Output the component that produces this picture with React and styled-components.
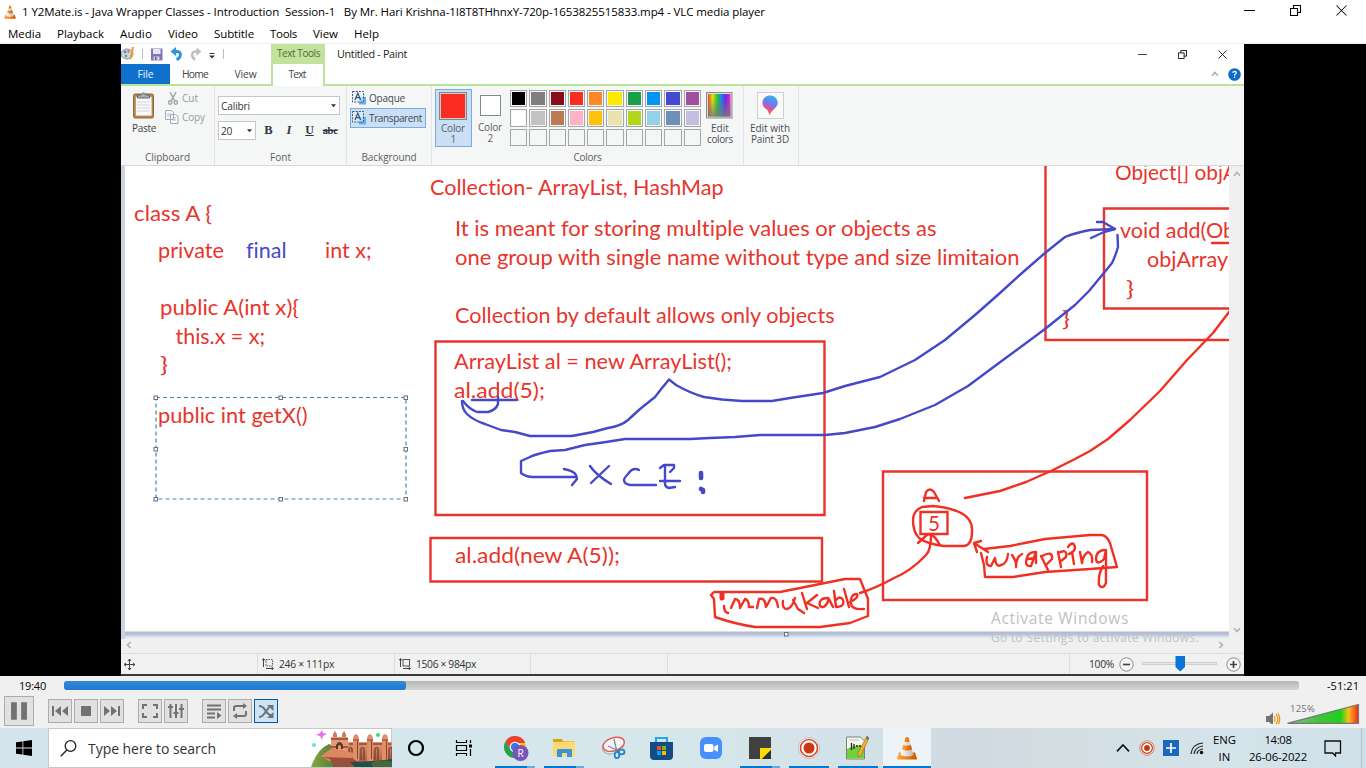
import React, { useLayoutEffect, useRef, useState } from "react";
import styled, { createGlobalStyle } from "styled-components";

const Global = createGlobalStyle`
  * { box-sizing: border-box; }
  html, body { margin: 0; padding: 0; overflow: hidden; }
  body { font-family: "Open Sans", "Noto Sans", sans-serif; font-size: 11.5px; color: #000; }
  svg { display: block; flex: none; }
`;

const RED = "#e8352b";
const BLUE = "#4549c8";

/* Text set to a known advance width by letter spacing */
const Run = styled.span`
  display: inline-block;
  flex: none;
  white-space: pre;
  width: ${(p) => p.$w}px;
  font-size: ${(p) => p.$size || 11.5}px;
  line-height: ${(p) => p.$lh || 14}px;
  color: ${(p) => p.$color || "inherit"};
`;

function Label({ w, size, lh, color, children }) {
  const ref = useRef(null);
  const [gap, setGap] = useState(0);
  useLayoutEffect(() => {
    const range = document.createRange();
    range.selectNodeContents(ref.current);
    const natural = range.getBoundingClientRect().width;
    setGap((w - natural) / children.length);
  }, [w, children]);
  return (
    <Run ref={ref} $w={w} $size={size} $lh={lh} $color={color} style={{ letterSpacing: gap }}>
      {children}
    </Run>
  );
}

const Screen = styled.div`
  width: 1366px;
  height: 768px;
  display: flex;
  flex-direction: column;
  background: #fff;
  overflow: hidden;
`;
const TitleBar = styled.header`
  height: 24px;
  display: flex;
  align-items: center;
  padding-left: 3px;
  gap: 5px;
`;
const WindowButtons = styled.div`
  margin-left: auto;
  display: flex;
  align-items: center;
  gap: ${(p) => p.$gap}px;
  padding-right: ${(p) => p.$pad}px;
  height: 20px;
`;
const MainButtons = styled(WindowButtons)`
  padding-bottom: 3px;
`;
const MenuBar = styled.nav`
  height: 20px;
  display: flex;
  align-items: center;
  gap: 16px;
  padding-left: 8px;
  border-bottom: 1px solid #eee;
`;
const Video = styled.main`
  height: 632px;
  display: flex;
  justify-content: flex-start;
  padding-left: 121px;
  background: #000;
`;
const Paint = styled.section`
  width: 1123px;
  height: 632px;
  display: flex;
  flex-direction: column;
  background: #fff;
  color: #333;
  border-bottom: 2px solid #3a3a3c;
`;
const PaintTitle = styled.div`
  height: 20px;
  display: flex;
  align-items: center;
`;
const QuickAccess = styled.div`
  width: 150px;
  height: 20px;
`;
const ToolsTag = styled.div`
  width: 54px;
  height: 20px;
  padding: 1px 0 0 6px;
  margin-right: 12px;
  background: #c1e39c;
`;
const TabRow = styled.div`
  height: 22px;
  display: flex;
  align-items: stretch;
  border-bottom: 2px solid #bce39a;
`;
const Tab = styled.div`
  width: ${(p) => p.$w}px;
  height: ${(p) => (p.$active ? 22 : 20)}px;
  display: flex;
  justify-content: center;
  align-items: center;
  background: ${(p) => (p.$file ? "#1071cd" : "#fff")};
  color: ${(p) => (p.$file ? "#e6f2ff" : "#444")};
  ${(p) => p.$active && "border: 2px solid #bce39a; border-width: 0 2px; padding: 0 2px 2px 0;"}
`;
const TabTools = styled.div`
  margin-left: auto;
  padding: 0 3px 0 0;
  display: flex;
  align-items: center;
  gap: 9px;
`;
const Ribbon = styled.div`
  height: 80px;
  display: flex;
  background: #f5f6f6;
  border-bottom: 1px solid #d8d9da;
`;
const Group = styled.div`
  width: ${(p) => p.$w}px;
  height: 79px;
  display: flex;
  flex-direction: column;
  align-items: center;
  border-right: 1px solid #e2e3e4;
  color: #5f6063;
`;
const GroupBody = styled.div`
  align-self: stretch;
  height: 64px;
  display: flex;
  padding: ${(p) => p.$pad || "0"};
  gap: ${(p) => p.$gap || 0}px;
`;
const Column = styled.div`
  display: flex;
  flex-direction: column;
  align-items: ${(p) => p.$align || "flex-start"};
  gap: ${(p) => p.$gap || 0}px;
`;
const Line = styled.div`
  display: flex;
  align-items: center;
  gap: ${(p) => p.$gap || 0}px;
  padding-left: ${(p) => p.$indent || 0}px;
`;
const Combo = styled.div`
  width: ${(p) => p.$w}px;
  height: 19px;
  display: flex;
  align-items: center;
  justify-content: space-between;
  padding: 0 3px 0 2px;
  background: #fff;
  border: 1px solid #c1c6cf;
  color: #333;
`;
const Formats = styled.div`
  display: flex;
  align-items: center;
  padding-left: 2px;
`;
const Format = styled.span`
  width: 20.6px;
  text-align: center;
  font: bold 12px "Liberation Serif", serif;
  font-size: ${(p) => p.$size || 12}px;
  font-style: ${(p) => (p.$italic ? "italic" : "normal")};
  text-decoration: ${(p) => p.$deco || "none"};
  letter-spacing: -0.3px;
  color: #303540;
`;
const Option = styled.div`
  width: 76px;
  height: ${(p) => (p.$on ? 20 : 19)}px;
  display: flex;
  align-items: center;
  gap: 3px;
  padding: ${(p) => (p.$on ? "0 0 0 1px" : "0 0 2px 2px")};
  border: ${(p) => (p.$on ? "1px solid #7fabdc" : "none")};
  background: ${(p) => (p.$on ? "#c9dff5" : "none")};
  color: #444b55;
`;
const ColorSlot = styled.div`
  width: 37px;
  height: 58px;
  display: flex;
  flex-direction: column;
  align-items: center;
  padding-top: ${(p) => (p.$on ? 2 : 5)}px;
  padding-right: 1px;
  gap: ${(p) => (p.$on ? 3 : 6)}px;
  border: 1px solid ${(p) => (p.$on ? "#79abdf" : "transparent")};
  background: ${(p) => (p.$on ? "#c9dff5" : "none")};
`;
const Chip = styled.div`
  width: ${(p) => p.$s}px;
  height: ${(p) => p.$s}px;
  background: ${(p) => p.$c};
  border: 1px solid #85888d;
  box-shadow: inset 0 0 0 ${(p) => (p.$ring ? 1 : 0)}px #c9cacc;
`;
const Palette = styled.div`
  display: grid;
  grid-template-columns: repeat(10, 17.3px);
  grid-auto-rows: 17.3px;
  gap: 2px;
  margin: 1px 6px 0 1px;
  height: 57px;
`;
const Swatch = styled.div`
  border: 1px solid #a4a6a8;
  padding: 1px;
  background: ${(p) => p.$c || "#f5f6f6"};
  background-clip: content-box;
`;
const BigTool = styled.div`
  width: ${(p) => p.$w}px;
  display: flex;
  flex-direction: column;
  align-items: center;
  color: #4d5055;
`;
const BigIcon = styled.div`
  height: 34px;
  display: flex;
  align-items: center;
  padding-bottom: 2px;
`;
const Workspace = styled.div`
  position: relative;
  height: 487px;
  display: grid;
  grid-template-columns: 1108px 15px;
  grid-template-rows: 473px 14px;
  background: #f0f0f0;
`;
const Board = styled.div`
  background: linear-gradient(#fff 465px, #b0b9ce 466px, #bac4d8 468.5px, #dce5f2 471px, #f0f0f0 473px);
  border-left: 4px solid #cdd2e3;
`;
const VScroll = styled.div`
  display: flex;
  flex-direction: column;
  align-items: center;
  justify-content: space-between;
  padding: 4px 0 5px;
`;
const HScroll = styled.div`
  display: flex;
  align-items: center;
  justify-content: space-between;
  padding: 0 4px 2px;
`;
const Watermark = styled.div`
  position: absolute;
  left: 870px;
  top: 443px;
  display: flex;
  flex-direction: column;
`;
const StatusBar = styled.div`
  height: 22px;
  display: flex;
  align-items: stretch;
  background: #f1f1f1;
  border-top: 1px solid #dcdddd;
`;
const StatusCell = styled.div`
  width: ${(p) => p.$w}px;
  display: flex;
  align-items: center;
  gap: ${(p) => p.$gap || 5}px;
  padding-left: ${(p) => p.$pad}px;
  border-right: ${(p) => (p.$last ? 0 : 1)}px solid #dedede;
`;
const Controls = styled.section`
  height: 52px;
  background: #f0f0f0;
`;
const SeekRow = styled.div`
  height: 20px;
  display: flex;
  align-items: center;
  padding-left: 19px;
`;
const SeekBar = styled.div`
  width: 1235px;
  height: 9px;
  margin: 0 28px 1px 18px;
  border-radius: 3px;
  background: linear-gradient(#b6b6b6, #d6d6d6);
`;
const Played = styled.div`
  width: 342px;
  height: 9px;
  border-radius: 3px;
  background: linear-gradient(#3189da, #2379cb);
`;
const ButtonRow = styled.div`
  height: 32px;
  display: flex;
  align-items: center;
  padding: 0 0 2px 4px;
`;
const Control = styled.button`
  width: ${(p) => p.$s || 24}px;
  height: ${(p) => p.$s || 24}px;
  margin: 0 ${(p) => p.$after ?? 2}px 0 0;
  padding: 0;
  display: grid;
  place-items: center;
  border: 1px solid ${(p) => (p.$on ? "#0a57a4" : "#adadad")};
  background: ${(p) => (p.$on ? "#cce4f7" : "#e1e1e1")};
`;
const Volume = styled.div`
  position: relative;
  margin-left: auto;
  margin-right: 6px;
  width: 94px;
  height: 26px;
`;
const VolumeText = styled.div`
  position: absolute;
  left: 24px;
  top: 2px;
`;
const Taskbar = styled.footer`
  height: 40px;
  display: flex;
  align-items: stretch;
  background: linear-gradient(90deg, #d3e4ec 0, #d6e7ec 50%, #d2e2e8 63%, #d0d9e1 70%, #d3dee2 78%, #d4e4eb 90%, #cfe0e8);
`;
const Start = styled.div`
  width: 48px;
  padding: 12px 0 0 16px;
`;
const Search = styled.div`
  width: 344px;
  display: flex;
  align-items: center;
  padding-left: 11px;
  gap: 11px;
  background: #fff;
  border: 1px solid #c6c8ca;
`;
const SearchHint = styled.div`
  display: flex;
  padding-top: 2px;
`;
const Fort = styled.div`
  margin-left: auto;
  margin-right: -1px;
`;
const TaskButton = styled.div`
  width: ${(p) => p.$w}px;
  height: 40px;
  display: flex;
  flex-direction: column;
  align-items: center;
  justify-content: space-between;
  padding-top: 4px;
  margin-left: ${(p) => (p.$active ? 3 : 0)}px;
  background: ${(p) => (p.$active ? "#edf4f7" : "none")};
`;
const ActiveCone = styled.div`
  padding-top: 4px;
`;
const Underline = styled.div`
  width: ${(p) => (p.$wide ? 48 : 40)}px;
  height: 2px;
  background: ${(p) => (p.$multi ? "linear-gradient(90deg, #0078d7 80%, #65abe5 80%)" : p.$on ? "#0078d7" : "none")};
`;
const Tray = styled.div`
  margin-left: auto;
  width: 251px;
  display: flex;
  align-items: center;
`;
const TrayStack = styled.div`
  display: flex;
  flex-direction: column;
  align-items: center;
  gap: 3px;
  margin: ${(p) => p.$m};
`;
const DesktopEdge = styled.div`
  align-self: stretch;
  width: 1px;
  margin-left: auto;
  margin-right: 4px;
  background: #b5c3ca;
`;

const Cone = ({ s }) => (
  <svg width={s} height={s} viewBox="0 0 24 24">
    <defs>
      <linearGradient id="cone" x1="0" x2="1">
        <stop offset="0" stopColor="#ffab45" />
        <stop offset=".5" stopColor="#f47b0b" />
        <stop offset="1" stopColor="#c95500" />
      </linearGradient>
      <linearGradient id="shell" x1="0" x2="1">
        <stop offset="0" stopColor="#fff" />
        <stop offset="1" stopColor="#b9b9b9" />
      </linearGradient>
    </defs>
    <path d="M4 16.5h16l2 6.2q0 .8-1 .8H3q-1 0-1-.8z" fill="url(#cone)" />
    <path d="M10.500 1.500q1.500-1 3 0L18.500 19q-6.500 3-13 0z" fill="url(#shell)" />
    <path d="M10.500 1.500q1.500-1 3 0l1 4q-2.500 1.200-5 0zM8.200 9q3.800 1.600 7.600 0l1.200 4.400q-5 2-10 0z" fill="url(#cone)" />
  </svg>
);

const WinMin = ({ s = 11, c = "#000" }) => (
  <svg width={s} height="11" viewBox="0 0 11 11" preserveAspectRatio="none"><path d="M0 5.500h11" stroke={c} /></svg>
);
const WinRestore = ({ s = 11 }) => (
  <svg width={s} height={s} viewBox="0 0 11 11"><path d="M.5 3.500h7v7h-7zM3.500 3V.5h7v7H8" fill="none" stroke="#000" strokeWidth="1.1" /></svg>
);
const WinClose = ({ s = 11 }) => (
  <svg width={s} height={s} viewBox="0 0 11 11"><path d="M.5.5l10 10M10.500.5l-10 10" stroke="#111" strokeWidth="1.05" /></svg>
);
const Caret = () => (
  <svg width="5" height="4" viewBox="0 0 6 4"><path d="M0 0h6L3 3.600z" fill="#333" /></svg>
);
const Chevron = ({ turn = 0, c = "#b0b0b0", s = 8, w = 1.6 }) => (
  <svg width={s} height={s} viewBox="0 0 8 8"><path d="M1 5.700l3-3.200 3 3.200" fill="none" stroke={c} strokeWidth={w} transform={`rotate(${turn} 4 4)`} /></svg>
);

const QuickIcons = () => (
  <svg width="150" height="20" viewBox="121 44 150 20">
    <ellipse cx="127" cy="54" rx="6" ry="5" fill="#cdd5dc" stroke="#8295a8" />
    <circle cx="125" cy="52" r="1.400" fill="#558cc4" /><circle cx="128.500" cy="51.500" r="1.200" fill="#d3763d" /><circle cx="126" cy="56" r="1.300" fill="#64a364" />
    <path d="M134 47l-2 11-2 2v-3l2-10z" fill="#e99b35" />
    <path d="M142.500 49v10M223.500 49v10" stroke="#bbb" />
    <path d="M151 48.500h11.500v12H151z" fill="#8176b5" />
    <path d="M153 49h7.500v5H153z" fill="#e9e7f4" /><path d="M153.500 56.500h6v4h-6z" fill="#d2cfe5" /><path d="M155 57h1.500v3H155z" fill="#5f548d" />
    <path d="M174.500 51.500h2.500q4 .5 3.300 4-.5 3-3.800 4" fill="none" stroke="#2f95dc" strokeWidth="3" />
    <path d="M170.500 51.500l5.500-4.500v9z" fill="#2f95dc" />
    <path d="M198 51.500h-2.500q-3.800.5-3.300 4 .5 3 3 4" fill="none" stroke="#b9bfc4" strokeWidth="2.600" />
    <path d="M201.500 51.500l-5-4v8.500z" fill="#b9bfc4" />
    <path d="M209.500 53.500h5" stroke="#333" /><path d="M209 55.500h6l-3 3z" fill="#333" />
  </svg>
);

const Clipboard = () => (
  <svg width="24" height="28" viewBox="0 0 24 28">
    <rect x="1.500" y="3" width="20" height="24" rx="1.500" fill="#b6864c" stroke="#95683a" />
    <path d="M4 6h15.500v18.500H4z" fill="#fbfbfb" stroke="#ddd" strokeWidth=".5" />
    <path d="M5 11h13M5 14h13M5 17h13M5 20h13" stroke="#cfd5db" />
    <path d="M5.500 7V4h3.500q2.500-4 5 0h3.500v3z" fill="#a9adb3" stroke="#63676e" />
  </svg>
);
const Scissors = () => (
  <svg width="10" height="13" viewBox="0 0 10 13"><g fill="none" stroke="#a5a8ac" strokeWidth="1.500"><path d="M2 0l4.700 8.700M8 0L3.300 8.700" /><circle cx="2.200" cy="10.500" r="1.700" /><circle cx="7.800" cy="10.500" r="1.700" /></g></svg>
);
const CopyPages = () => (
  <svg width="14" height="14" viewBox="0 0 14 14"><g fill="#fafafa" stroke="#9dabc0"><path d="M.5.500h6l2 2v7h-8zM5.500 4.500h5l2.500 2v7H5.500z" /></g><path d="M2 4h4M2 6h3M7 8h4M7 10h4" stroke="#b3bfd0" /></svg>
);
const LetterBox = () => (
  <svg width="14" height="14" viewBox="0 0 14 14">
    <path d="M7 6h7v7.500H7z" fill="#62aff2" /><rect x=".5" y=".5" width="11" height="10.500" fill="#eaf1f8" fillOpacity=".6" stroke="#45566b" strokeDasharray="2 1.200" />
    <path d="M3 9l2.800-7L8.600 9M4 6.600h3.600" fill="none" stroke="#24548e" strokeWidth="1.200" />
  </svg>
);
const Rainbow = () => (
  <svg width="27" height="27" viewBox="0 0 27 27">
    <defs>
      <linearGradient id="rb"><stop offset="0" stopColor="#ea4b22" /><stop offset=".2" stopColor="#e8dc16" /><stop offset=".42" stopColor="#20c437" /><stop offset=".6" stopColor="#1980f0" /><stop offset=".78" stopColor="#7024e8" /><stop offset="1" stopColor="#f02bc0" /></linearGradient>
      <linearGradient id="rg" x2="0" y2="1"><stop offset=".2" stopColor="#777" stopOpacity="0" /><stop offset="1" stopColor="#777" stopOpacity=".85" /></linearGradient>
    </defs>
    <rect x=".5" y=".5" width="25.500" height="25.500" fill="#ddd" stroke="#8b8b8f" />
    <path d="M2 2h22.500v22.500H2z" fill="url(#rb)" /><path d="M2 2h22.500v22.500H2z" fill="url(#rg)" />
  </svg>
);
const Paint3D = () => (
  <svg width="27" height="27" viewBox="0 0 27 27">
    <defs><linearGradient id="p3" x1=".7" x2=".4" y2="1"><stop offset="0" stopColor="#26b9f2" /><stop offset=".45" stopColor="#7b74ed" /><stop offset=".7" stopColor="#e2508e" /><stop offset="1" stopColor="#ef8a1d" /></linearGradient></defs>
    <rect x=".5" y=".5" width="26" height="26" fill="#fafafa" stroke="#cfcfcf" />
    <path d="M13.500 3.500a7.300 7.300 0 0 1 7.300 7.300c0 5-6.800 7.200-8 12.700-1.200-2-1-3.500-2.800-6a7.300 7.300 0 0 1 3.500-14z" fill="url(#p3)" />
  </svg>
);

const notes = [
  ["Collection- ArrayList, HashMap", 430, 195, 293.5],
  ["class A {", 134, 221, 78],
  ["private", 158, 258, 66],
  ["final", 246, 257.5, 40.5, BLUE],
  ["int x;", 325, 258, 46.5],
  ["public A(int x){", 160, 314.5, 139],
  ["this.x = x;", 175.5, 343.5, 89.5],
  ["}", 160, 371.5, 8],
  ["public int getX()", 158, 422.5, 149.5],
  ["It is meant for storing multiple values or objects as", 455, 236, 481.5],
  ["one group with single name without type and size limitaion", 455, 265, 564.5],
  ["Collection by default allows only objects", 455, 323, 379.5],
  ["ArrayList al = new ArrayList();", 454, 369, 278],
  ["al.add(5);", 454, 398, 91],
  ["al.add(new A(5));", 455, 563, 165],
  ["Object[] objA", 1115, 180, 122],
  ["void add(Ob", 1120, 238, 115],
  ["objArray", 1147, 267, 81],
  ["}", 1126, 296, 8],
  ["}", 1062, 325.5, 8],
  ["5", 928, 531, 12],
];
const Ink = styled.text`
  font-family: Lato, sans-serif;
  font-size: 20.5px;
  font-variant-ligatures: none;
`;
const Drawing = () => (
  <svg width="1104" height="473" viewBox="125 166 1104 473">
    <g fill="none" stroke={RED} strokeWidth="2.400">
      <path d="M435.500 341.500h389v173.500h-389zM430.500 538h391.500v43.500h-391.500zM883 471.500h264v128.500H883zM1045.500 164v176H1230M1230 208.500h-126v100h126M920.500 512h27v22h-27z" />
    </g>
    {notes.map(([text, x, y, w, c], i) => (
      <Ink key={i} x={x} y={y} fill={c || RED} textLength={w} lengthAdjust="spacingAndGlyphs">{text}</Ink>
    ))}
    <g fill="none" stroke={BLUE} strokeWidth="2.400" strokeLinejoin="round" strokeLinecap="round">
      <path d="M472 400h44M498 397v7q-2 6-10 8h-11q-8-3-14-11" />
      <path d="M462 401Q462 409 467 414 473 420 485 424 L501 430 515 432 530 436H572L593 432 608 428Q621 426 628 420L640 409 655 397 662 388 669 379.500L676 385Q690 393 704 397L722 399.500 742 401H772L790 398 823 393 845 386 880 377 915 360 945 340 975 315 1000 293 1022 273 1045 253 1065 237Q1075 233 1090 230L1115 229" />
      <path d="M1097 222h6l12 7-11 3-13 6" />
      <path d="M1117.500 235L1118 247Q1115 257 1112 263L1103 274 1089 291 1075 305 1045 329 1003 360 968 386 935 405 900 419 875 427 845 433 825 435H760L735 437 710 438 690 439H625L606 442 585 445 565 450 550 451Q533 455 530 457L521 461V473Q526 477 533 477H576" />
      <path d="M564 469q10 2 12 6l1 4-5 6M590 466q6 9 21 18M609 466l-18 17M639 470q-6-3-11 4-4 4-4 6 0 4 6 5h26M665 466v18q0 3 4 4l6-1M660 468l4-3h10v3l-4 4M660 481h20" />
      <path d="M701 473v5M701 489l2 1v2" strokeWidth="4.600" />
    </g>
    <g fill="none" stroke="#f03023" strokeWidth="2.400" strokeLinejoin="round" strokeLinecap="round">
      <path d="M1212 243h20M1232 308L1213 333 1187 360 1160 391 1130 420 1108 439 1090 451 1075 459 1051 471 1026 482 1000 491 985 494 965 498" />
      <path d="M924 501l2-9q4-5 8 0l5 9M924 498h12" />
      <path d="M922 507q-9 4-9 13 0 12 6 18 8 6 25 8h20q8-1 8-14 1-14-13-20-12-5-26-6z" />
      <path d="M918 543l10-9q6 0 12 11M931 535q0 15-5 20-15 16-32 23-18 10-34 15" />
      <path d="M711 595l3-3h66l35-7 30-6h15l8 20v17l-18 7-30 4h-65q-20-3-40-10l-1-18z" />
      <path d="M984 549l26-3 35-7 45-4h12q5 1 8 8l7 24-27 2-45 3-32 5h-28l-1-12-3-12M974 543l14 9M981 541l-7 2 3 9" />
      <path d="M987 557q-2 9 4 9l4-8q1 10 6 7 6-1 7-11M1012 555q5 7 4 12 0-10 6-13M1036 552q-8 0-9 6-3 9 4 8l5-14v11M1028 559l8-1M1041 556l7 14M1042 556q11-6 10 3l-5 5M1058 552l3 15M1058 553q10-5 8 4l-5 4M1068 547q5-7 7 0 0 5-6 7M1072 552l2 12M1080 552l2 11q1-8 6-11 5 2 4 10M1104 550q-8 1-8 9 1 7 8 0l2-9v33q-3 7-7 2-1-11 4-19" />
      <path d="M724 606q0 6 4 7M731 608l4-9q5 0 5 9l5-9q4 1 4 8l4 0M757 608l2-9q6-2 7 8l5-9q6-1 7 9M783 601q-1 8 4 8 5-1 8-11M793 600l5 9 6 4M802 593l5 16M817 595l-10 8 11 5M828 598q-10 0-8 8 5 4 9-7l4 8M834 591l2 16q9 0 7-7-3-5-7 0M844 589l5 18M850 602q9-4 7-8-7 0-6 10 1 6 13 5" />
      <path d="M722 594v4" strokeWidth="5" />
    </g>
    <rect x="156" y="397.500" width="250" height="101.500" fill="none" stroke="#398bb8" strokeDasharray="4 3" strokeWidth="1.200" />
    <g fill="#fff" stroke="#667080">
      {[[156, 397.5], [281, 397.5], [406, 397.5], [156, 449], [406, 449], [156, 499], [281, 499], [406, 499], [786.5, 634]].map(([x, y]) => (
        <rect key={`${x}-${y}`} x={x - 2} y={y - 1.5} width="3.500" height="3.500" />
      ))}
    </g>
  </svg>
);

const SizeIcon = ({ dashed }) => (
  <svg width="12" height="12" viewBox="0 0 12 12"><rect x="4" y="1.500" width="6.500" height="6.500" fill="none" stroke="#555" strokeDasharray={dashed ? "1.500 1" : undefined} /><path d="M1.500 1v8M0 2.500l1.500-2 1.500 2M4 10.500h7M9.500 9l2 1.500-2 1.500" fill="none" stroke="#444" /></svg>
);
const Round = ({ plus }) => (
  <svg width="15" height="15" viewBox="0 0 15 15"><circle cx="7.500" cy="7.500" r="6.700" fill="#f8f8f8" stroke="#8b8b8b" /><path d={plus ? "M4 7.500h7M7.500 4v7" : "M4 7.500h7"} stroke="#444" strokeWidth="1.700" /></svg>
);

const Glyph = ({ d, s = 18, line }) => (
  <svg width={s} height={s} viewBox="0 0 18 18"><path d={d} fill={line ? "none" : "#727272"} stroke={line ? "#727272" : "none"} strokeWidth="2" /></svg>
);

const FortArt = () => (
  <svg width="81" height="38" viewBox="0 0 81 38">
    <defs>
      <linearGradient id="wall" x2="0" y2="1"><stop offset="0" stopColor="#e39871" /><stop offset="1" stopColor="#9e5038" /></linearGradient>
      <linearGradient id="hill"><stop offset="0" stopColor="#86a73e" /><stop offset="1" stopColor="#315f35" /></linearGradient>
    </defs>
    <path d="M0 38q6-18 18-23l20 9 4 14z" fill="url(#hill)" />
    <path d="M33 13h48v25H33z" fill="url(#wall)" />
    <path d="M20 8h17v19H20z" fill="#e39a72" />
    <path d="M20 10h17M20 18h17M38 15h42" stroke="#8d4735" strokeWidth="1.300" />
    <path d="M25 20v-4q3.500-6 7 0v4z" fill="#5c332f" /><path d="M27 20v-3q1.500-2 3 0v3z" fill="#daa354" />
    {[22, 31].map((x) => <path key={x} d={`M${x} 8V5l2-3 2 3v3z`} fill="#cb7d5d" />)}
    {[42, 56, 71].map((x) => <g key={x}><path d={`M${x} 10q0-4 3-5 3 1 3 5v22h-6z`} fill="#df9067" /><path d={`M${x} 11h6M${x + 4.5} 12v18`} stroke="#874331" /></g>)}
    {[38, 50, 64, 78].map((x) => <path key={x} d={`M${x} 31V20q1.500-3 3 0v11`} fill="none" stroke="#6f3b30" strokeWidth="1.200" />)}
    <path d="M10 27l11-8 22 5-2 7-23 1z" fill="#dc875e" /><path d="M12 28l29 1 15 9H23l-4-8z" fill="#9b4e3d" />
    <path d="M39 33q20 0 42-3v8H44z" fill="#234f47" /><path d="M60 34q10-5 21-1v5H62z" fill="#47683a" />
    <path d="M11 1l1 3 4 1-4 2-1 4-2-4-4-1 4-2z" fill="#dd74f2" /><circle cx="3" cy="16" r="2" fill="#69dde2" /><circle cx="67" cy="6" r="2" fill="#43d66a" />
  </svg>
);

const icons = {
  cortana: <circle cx="14" cy="16" r="7" fill="none" stroke="#000" strokeWidth="2.200" />,
  tasks: <g fill="none" stroke="#000"><path d="M6.500 8v2.500h10V8M6.500 24v-2.500h10V24M6.500 13.500h10v5h-10zM20.500 8v3M20.500 17v7" strokeWidth="1.200" /><path d="M19 12.500h3v3h-3z" fill="#000" stroke="none" /></g>,
  chrome: (
    <g>
      <circle cx="14" cy="15" r="11" fill="#fbc116" /><path d="M4.500 9.500A11 11 0 0 1 24.200 11H14l-5 6z" fill="#e94235" /><path d="M4.500 9.500A11 11 0 0 0 13 26l5-9-9 0z" fill="#1fa354" />
      <circle cx="14" cy="15" r="5.300" fill="#fff" /><circle cx="14" cy="15" r="4.200" fill="#327be5" /><circle cx="19.500" cy="21" r="8" fill="#7a53ba" />
      <text x="16.500" y="24.500" fontSize="10" fill="#fff" fontFamily="Open Sans, sans-serif">R</text>
    </g>
  ),
  folder: <g><path d="M3 7h9l2 2h11v15H3z" fill="#f5bd35" /><path d="M3 7h9v3H3z" fill="#dda20b" /><path d="M3 10h22v14H3z" fill="#ffd973" /><path d="M7 25v-7q0-1 1-1h13q1 0 1 1v7h-5v-4h-5v4z" fill="#3c94d7" /></g>,
  snip: <g fill="none"><ellipse cx="14" cy="14" rx="11" ry="7.500" transform="rotate(-18 14 14)" fill="#e5e5e8" stroke="#a9adb3" /><ellipse cx="14.500" cy="12.500" rx="11" ry="6.500" transform="rotate(-18 14 12)" fill="#f4f4f6" stroke="#e3595b" strokeWidth="1.400" /><path d="M15 7l3 13M9 14l11 5" stroke="#7b8794" strokeWidth="1.200" /><ellipse cx="18" cy="23" rx="2.300" ry="3.200" stroke="#2184c8" strokeWidth="1.800" /><ellipse cx="22.500" cy="20" rx="3" ry="2.300" stroke="#2184c8" strokeWidth="1.800" /></g>,
  store: <g><path d="M2 10h23v14q0 4-4 4H6q-4 0-4-4z" fill="#144d86" /><path d="M8 10V6h11v4" fill="none" stroke="#28a8e9" strokeWidth="2.200" /><path d="M9 14h4v4H9z" fill="#f25022" /><path d="M14 14h4v4h-4z" fill="#7fba00" /><path d="M9 19h4v4H9z" fill="#00a4ef" /><path d="M14 19h4v4h-4z" fill="#ffb900" /></g>,
  zoom: <g><rect x="3" y="5" width="22" height="22" rx="6" fill="#478eff" /><rect x="7" y="12" width="9.500" height="8" rx="2" fill="#fff" /><path d="M17.300 14.500l3.700-2v7.500l-3.700-2z" fill="#fff" /></g>,
  notes: <g><path d="M3 5h22v22H3z" fill="#404041" /><path d="M14 16h11v2l-9 9h-2z" fill="#ffda00" /><path d="M25 18v9h-9z" fill="#303030" /></g>,
  record: <g><circle cx="14" cy="16" r="10.500" fill="#fff" stroke="#aaa" strokeWidth=".7" /><circle cx="14" cy="16" r="8.500" fill="none" stroke="#d84926" strokeWidth="1.600" /><circle cx="14" cy="16" r="5.500" fill="#cf3511" /></g>,
  npp: <g><path d="M2.500 5h14l4 4v18h-18z" fill="#f7f7f1" stroke="#7c8175" /><path d="M3 17q9-5 17-3v12.500H3z" fill="#73d03b" /><path d="M5 8h10" stroke="#bbb" /><path d="M7.500 11v7M10 12v5" stroke="#222" strokeWidth="1.300" /><path d="M12 14h2M15 14h2" stroke="#222" strokeWidth="1.500" /><path d="M23 4l2 2-8 17-3 2 0-4z" fill="#f6ae2d" stroke="#9c6520" strokeWidth=".6" /><path d="M23 4l2 2-1 2-2-1z" fill="#6c7580" /></g>,
};
const TaskIcon = ({ name }) => <svg width="28" height="30" viewBox="0 0 28 30">{icons[name]}</svg>;

const Rings = ({ s }) => (
  <svg width={s} height={s} viewBox="0 0 16 16"><circle cx="8" cy="8" r="7.200" fill="#fff" stroke="#bd6750" strokeWidth=".8" /><circle cx="8" cy="8" r="5.400" fill="none" stroke="#c6431d" strokeWidth="1.300" /><circle cx="8" cy="8" r="2.900" fill="#c83310" /></svg>
);

const colors = [
  "#000", "#7f7f7f", "#880d1b", "#fb2d22", "#ff8728", "#fee900", "#179f4a", "#0095f0", "#4549cf", "#a1509e",
  "#fff", "#c3c3c3", "#bb7a52", "#ffb1c8", "#ffc20c", "#ebe2ad", "#b2d71a", "#94d3e7", "#6e8fb6", "#c6bde2",
  ...Array(10).fill(""),
];

export default function App() {
  return (
    <Screen>
      <Global />
      <TitleBar>
        <Cone s={14} />
        <Label w={743} size={11.5}>{"1 Y2Mate.is - Java Wrapper Classes - Introduction  Session-1   By Mr. Hari Krishna-1I8T8THhnxY-720p-1653825515833.mp4 - VLC media player"}</Label>
        <MainButtons $gap={35} $pad={19}><WinMin /><WinRestore /><WinClose /></MainButtons>
      </TitleBar>
      <MenuBar>
        {[["Media", 33], ["Playback", 47], ["Audio", 32], ["Video", 30], ["Subtitle", 40], ["Tools", 27], ["View", 25], ["Help", 25]].map(([t, w]) => (
          <Label key={t} w={w}>{t}</Label>
        ))}
      </MenuBar>
      <Video>
        <Paint>
          <PaintTitle>
            <QuickAccess><QuickIcons /></QuickAccess>
            <ToolsTag><Label w={43} size={10} color="#50703a">Text Tools</Label></ToolsTag>
            <Label w={70} size={10.8} color="#222">Untitled - Paint</Label>
            <WindowButtons $gap={31} $pad={17}><WinMin s={9} c="#333" /><WinRestore s={9} /><WinClose s={9} /></WindowButtons>
          </PaintTitle>
          <TabRow>
            <Tab $w={49} $file><Label w={16} size={10.3}>File</Label></Tab>
            <Tab $w={50}><Label w={26} size={10.3}>Home</Label></Tab>
            <Tab $w={51}><Label w={22} size={10.3}>View</Label></Tab>
            <Tab $w={54} $active><Label w={17} size={10.3}>Text</Label></Tab>
            <TabTools>
              <Chevron />
              <svg width="13" height="13" viewBox="0 0 13 13"><circle cx="6.500" cy="6.500" r="6.300" fill="#0d6cc9" /><path d="M4.700 4.900q.2-1.600 1.900-1.600 1.800.1 1.700 1.600-.1 1-1.700 1.800v1M6.600 8.800v1.300" fill="none" stroke="#fff" strokeWidth="1.200" /></svg>
            </TabTools>
          </TabRow>
          <Ribbon>
            <Group $w={94}>
              <GroupBody $pad="5px 0 0 11px" $gap={9}>
                <Column $align="center" $gap={2}><Clipboard /><Label w={24} size={10} color="#444">Paste</Label></Column>
                <Column $gap={5}>
                  <Line $gap={4} $indent={3}><Scissors /><Label w={16} size={10} color="#999ba0">Cut</Label></Line>
                  <Line $gap={3}><CopyPages /><Label w={23} size={10} color="#999ba0">Copy</Label></Line>
                </Column>
              </GroupBody>
              <Label w={45} size={10}>Clipboard</Label>
            </Group>
            <Group $w={132}>
              <GroupBody $pad="10px 0 0 3px">
                <Column $gap={6}>
                  <Combo $w={122}><Label w={29} size={10.2}>Calibri</Label><Caret /></Combo>
                  <Line>
                    <Combo $w={38}><Label w={11} size={10.2}>20</Label><Caret /></Combo>
                    <Formats>
                      <Format $size={12.5}>B</Format><Format $italic $size={12.5}>I</Format><Format $deco="underline" $size={12}>U</Format><Format $deco="line-through" $size={10.5}>abc</Format>
                    </Formats>
                  </Line>
                </Column>
              </GroupBody>
              <Label w={21} size={10}>Font</Label>
            </Group>
            <Group $w={85}>
              <GroupBody $pad="3px 0 0 3px">
                <Column>
                  <Option><LetterBox /><Label w={36} size={10}>Opaque</Label></Option>
                  <Option $on><LetterBox /><Label w={53} size={10}>Transparent</Label></Option>
                </Column>
              </GroupBody>
              <Label w={55} size={10}>Background</Label>
            </Group>
            <Group $w={312}>
              <GroupBody $pad="3px 0 0 3px">
                <ColorSlot $on>
                  <Chip $s={28} $c="#fb2d22" $ring />
                  <Column $align="center"><Label w={24} size={10} lh={11}>Color</Label><Label w={5} size={10} lh={11}>1</Label></Column>
                </ColorSlot>
                <ColorSlot>
                  <Chip $s={21} $c="#fff" />
                  <Column $align="center"><Label w={24} size={10} lh={11}>Color</Label><Label w={5} size={10} lh={11}>2</Label></Column>
                </ColorSlot>
                <Palette>{colors.map((c, i) => <Swatch key={i} $c={c} />)}</Palette>
                <BigTool $w={26}>
                  <BigIcon><Rainbow /></BigIcon>
                  <Label w={18} size={10} lh={11}>Edit</Label>
                  <Label w={26} size={10} lh={11}>colors</Label>
                </BigTool>
              </GroupBody>
              <Label w={28} size={10}>Colors</Label>
            </Group>
            <Group $w={55}>
              <GroupBody $pad="3px 0 0 6px">
                <BigTool $w={40}>
                  <BigIcon><Paint3D /></BigIcon>
                  <Label w={40} size={10} lh={11}>Edit with</Label>
                  <Label w={38} size={10} lh={11}>Paint 3D</Label>
                </BigTool>
              </GroupBody>
            </Group>
          </Ribbon>
          <Workspace>
            <Board><Drawing /></Board>
            <VScroll><Chevron /><Chevron turn={180} /></VScroll>
            <HScroll><Chevron turn={-90} /><Chevron turn={90} /></HScroll>
            <Watermark>
              <Label w={138} size={15.5} lh={19} color="#bfc0c2">Activate Windows</Label>
              <Label w={208} size={11.8} lh={18} color="#c0c1c5">Go to Settings to activate Windows.</Label>
            </Watermark>
          </Workspace>
          <StatusBar>
            <StatusCell $w={137} $pad={3}>
              <svg width="11" height="11" viewBox="0 0 11 11"><path d="M5.500 0v11M0 5.500h11M4 2l1.500-2L7 2M4 9l1.500 2L7 9M2 4L0 5.500 2 7M9 4l2 1.500L9 7" fill="none" stroke="#444" /></svg>
            </StatusCell>
            <StatusCell $w={137} $pad={4}><SizeIcon dashed /><Label w={55} size={10.3}>246 × 111px</Label></StatusCell>
            <StatusCell $w={136} $pad={4}><SizeIcon /><Label w={60} size={10.3}>1506 × 984px</Label></StatusCell>
            <StatusCell $w={137} />
            <StatusCell $w={402} />
            <StatusCell $w={174} $pad={19} $last>
              <Label w={25} size={10.3}>100%</Label>
              <Round />
              <svg width="82" height="18" viewBox="0 0 82 18"><rect x="3.500" y="7.500" width="74" height="2" fill="#e6e6e6" stroke="#cfcfcf" /><path d="M36.500 1H46v11l-4.750 4.500L36.500 12z" fill="#0a73d8" /></svg>
              <Round plus />
            </StatusCell>
          </StatusBar>
        </Paint>
      </Video>
      <Controls>
        <SeekRow>
          <Label w={27} size={11}>19:40</Label>
          <SeekBar><Played /></SeekBar>
          <Label w={32} size={11}>-51:21</Label>
        </SeekRow>
        <ButtonRow>
          <Control $s={30} $after={14}><Glyph s={26} d="M3.500 3h4v12h-4zM10.500 3h4v12h-4z" /></Control>
          <Control><Glyph d="M1 4h2v10H1zM10 4v10L4 9zM17 4v10l-6-5z" /></Control>
          <Control><Glyph d="M4 4h10v10H4z" /></Control>
          <Control $after={14}><Glyph d="M15 4h2v10h-2zM8 4v10l6-5zM1 4v10l6-5z" /></Control>
          <Control><Glyph line d="M6 3H2v4M12 3h4v4M6 15H2v-4M12 15h4v-4" /></Control>
          <Control $after={14}><Glyph line d="M3.500 2v14M1 5h5M9 2v14M6.500 11h5M14.500 2v14M12 7h5" /></Control>
          <Control><svg width="18" height="18" viewBox="0 0 18 18"><path d="M2 3.500h14M2 7.500h14M2 11.500h8M2 15.500h8" stroke="#727272" strokeWidth="2" /><path d="M12 10l4.500 3.500-4.500 3.500z" fill="#727272" /></svg></Control>
          <Control><svg width="18" height="18" viewBox="0 0 18 18"><path d="M3 9V6q0-2 2-2h8M15 9v3q0 2-2 2H5" fill="none" stroke="#727272" strokeWidth="2" /><path d="M12 1l4 3-4 3zM6 11l-4 3 4 3z" fill="#727272" /></svg></Control>
          <Control $on><svg width="18" height="18" viewBox="0 0 18 18"><path d="M2 4q4 0 6 4t7 6M2 15q3 0 5-3l6-8" fill="none" stroke="#727272" strokeWidth="2" /><path d="M10 3h6.500v6zM10 16h6.500v-6z" fill="#727272" /></svg></Control>
          <Volume>
            <svg width="94" height="26" viewBox="1266 698 94 26">
              <defs><linearGradient id="vol"><stop offset="0" stopColor="#7ec87c" /><stop offset=".45" stopColor="#3fc33c" /><stop offset=".75" stopColor="#1bd31b" /><stop offset=".86" stopColor="#f6c11b" /><stop offset="1" stopColor="#f1281c" /></linearGradient></defs>
              <path d="M1266 716h3l4-3.500v13l-4-3.500h-3z" fill="#727272" />
              <path d="M1274 716q2 3 0 6M1276 714q4 5 0 10M1278 713q3.500 6 0 12" fill="none" stroke="#f09a25" strokeWidth="1.300" />
              <path d="M1287.500 723.300l71-18.800v18.800z" fill="url(#vol)" stroke="#777" strokeWidth="1.200" />
            </svg>
            <VolumeText><Label w={25} size={9.5} lh={15} color="#727272">125%</Label></VolumeText>
          </Volume>
        </ButtonRow>
      </Controls>
      <Taskbar>
        <Start>
          <svg width="16" height="16" viewBox="0 0 16 16"><path d="M0 2.300l6.500-.9v6.200H0zM7.300 1.300L16 0v7.600H7.300zM0 8.400h6.500v6.200L0 13.700zM7.300 8.400H16V16l-8.700-1.200z" fill="#000" /></svg>
        </Start>
        <Search>
          <svg width="17" height="17" viewBox="0 0 17 17"><circle cx="10.500" cy="6" r="5.300" fill="none" stroke="#222" strokeWidth="1.300" /><path d="M6.800 10L.8 16.200" stroke="#222" strokeWidth="1.400" /></svg>
          <SearchHint><Label w={128} size={14} lh={18} color="#333">Type here to search</Label></SearchHint>
          <Fort><FortArt /></Fort>
        </Search>
        <TaskButton $w={48}><TaskIcon name="cortana" /></TaskButton>
        <TaskButton $w={48}><TaskIcon name="tasks" /></TaskButton>
        <TaskButton $w={54}><TaskIcon name="chrome" /><Underline $multi /></TaskButton>
        <TaskButton $w={44}><TaskIcon name="folder" /><Underline $multi /></TaskButton>
        <TaskButton $w={54}><TaskIcon name="snip" /></TaskButton>
        <TaskButton $w={44}><TaskIcon name="store" /></TaskButton>
        <TaskButton $w={54}><TaskIcon name="zoom" /></TaskButton>
        <TaskButton $w={44}><TaskIcon name="notes" /><Underline $multi /></TaskButton>
        <TaskButton $w={54}><TaskIcon name="record" /><Underline $on /></TaskButton>
        <TaskButton $w={44}><TaskIcon name="npp" /><Underline $on /></TaskButton>
        <TaskButton $w={48} $active><ActiveCone><Cone s={24} /></ActiveCone><Underline $on $wide /></TaskButton>
        <Tray>
          <Chevron c="#111" s={16} w={0.8} />
          <TrayStack $m="0 0 0 8px"><Rings s={16} /></TrayStack>
          <TrayStack $m="0 0 0 8px"><svg width="16" height="16" viewBox="0 0 16 16"><path d="M0 0h16v16H0z" fill="#1b66be" /><path d="M8 3v10M3 8h10" stroke="#fff" strokeWidth="1.700" /></svg></TrayStack>
          <TrayStack $m="0 0 0 11px"><svg width="14" height="14" viewBox="0 0 14 14"><g fill="none" stroke="#222" strokeWidth="1.200"><path d="M1 13Q2 3 13 2M4 13q1-7 9-8M7 13q0-4 6-5" /></g><circle cx="11.500" cy="11.500" r="1.700" /></svg></TrayStack>
          <TrayStack $m="0 0 0 9px"><Label w={23} size={11.3}>ENG</Label><Label w={12} size={11.3}>IN</Label></TrayStack>
          <TrayStack $m="0 0 0 13px"><Label w={27} size={11.3}>14:08</Label><Label w={58} size={11.3}>26-06-2022</Label></TrayStack>
          <TrayStack $m="0 0 0 17px"><svg width="18" height="17" viewBox="0 0 18 17"><path d="M1 1h15.500v12h-5v3l-3-3H1z" fill="none" stroke="#111" strokeWidth="1.300" /></svg></TrayStack>
          <DesktopEdge />
        </Tray>
      </Taskbar>
    </Screen>
  );
}
